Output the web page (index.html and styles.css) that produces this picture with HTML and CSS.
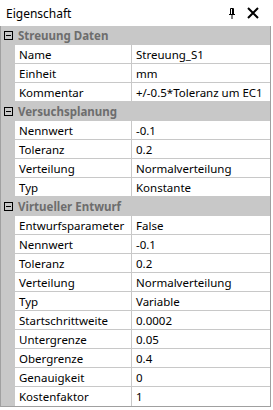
FILE: index.html
```html
<!DOCTYPE html>
<html>
<head>
<meta charset="utf-8">
<link rel="stylesheet" href="styles.css">
</head>
<body>
<div class="window">
  <div class="titlebar">
    <span class="title">Eigenschaft</span>
    <span class="tools">
      <svg class="pin" width="8" height="11" viewBox="0 0 8 11">
        <path d="M2.5 0.5h3v6h-3z M1 6.5h6 M4 7v4" fill="none" stroke="#000" stroke-width="1"/>
        <path d="M4.5 1v5" stroke="#000" stroke-width="1"/>
      </svg>
      <svg class="close" width="12" height="12" viewBox="0 0 12 12">
        <path d="M1 1L11 11M11 1L1 11" stroke="#000" stroke-width="2"/>
      </svg>
    </span>
  </div>
  <div class="grid">
    <div class="cat"><span class="box"></span><span class="cattext">Streuung Daten</span></div>
    <div class="row"><span class="gut"></span><span class="name">Name</span><span class="val">Streuung_S1</span></div>
    <div class="row"><span class="gut"></span><span class="name">Einheit</span><span class="val">mm</span></div>
    <div class="row"><span class="gut"></span><span class="name">Kommentar</span><span class="val">+/-0.5*Toleranz um EC1</span></div>
    <div class="cat"><span class="box"></span><span class="cattext">Versuchsplanung</span></div>
    <div class="row"><span class="gut"></span><span class="name">Nennwert</span><span class="val">-0.1</span></div>
    <div class="row"><span class="gut"></span><span class="name">Toleranz</span><span class="val">0.2</span></div>
    <div class="row"><span class="gut"></span><span class="name">Verteilung</span><span class="val">Normalverteilung</span></div>
    <div class="row"><span class="gut"></span><span class="name">Typ</span><span class="val">Konstante</span></div>
    <div class="cat"><span class="box"></span><span class="cattext">Virtueller Entwurf</span></div>
    <div class="row"><span class="gut"></span><span class="name">Entwurfsparameter</span><span class="val">False</span></div>
    <div class="row"><span class="gut"></span><span class="name">Nennwert</span><span class="val">-0.1</span></div>
    <div class="row"><span class="gut"></span><span class="name">Toleranz</span><span class="val">0.2</span></div>
    <div class="row"><span class="gut"></span><span class="name">Verteilung</span><span class="val">Normalverteilung</span></div>
    <div class="row"><span class="gut"></span><span class="name">Typ</span><span class="val">Variable</span></div>
    <div class="row"><span class="gut"></span><span class="name">Startschrittweite</span><span class="val">0.0002</span></div>
    <div class="row"><span class="gut"></span><span class="name">Untergrenze</span><span class="val">0.05</span></div>
    <div class="row"><span class="gut"></span><span class="name">Obergrenze</span><span class="val">0.4</span></div>
    <div class="row"><span class="gut"></span><span class="name">Genauigkeit</span><span class="val">0</span></div>
    <div class="row"><span class="gut"></span><span class="name">Kostenfaktor</span><span class="val">1</span></div>
  </div>
</div>
</body>
</html>
```
FILE: styles.css
```css
html, body {
  margin: 0;
  padding: 0;
  background: #ffffff;
}
body {
  font-family: "Noto Sans", "Open Sans", sans-serif;
  font-size: 12px;
  color: #000;
  width: 273px;
  height: 410px;
  overflow: hidden;
}
.window {
  display: flex;
  flex-direction: column;
  width: 271px;
}
.titlebar {
  height: 26px;
  display: flex;
  align-items: center;
  justify-content: space-between;
  padding: 0 12px 0 6px;
}
.title {
  font-size: 12px;
}
.tools {
  display: flex;
  align-items: center;
  gap: 11px;
}
.grid {
  border: 1px solid #a0a0a0;
  border-top: none;
  background: #c8c8c8;
  display: flex;
  flex-direction: column;
  font-size: 11.5px;
}
.cat {
  height: 19px;
  display: flex;
  align-items: center;
  background: #c8c8c8;
}
.box {
  width: 7px;
  height: 7px;
  border: 1px solid #000;
  margin: 0 5px 0 3px;
  position: relative;
  flex: none;
}
.box::after {
  content: "";
  position: absolute;
  left: 1px;
  right: 1px;
  top: 3px;
  height: 1px;
  background: #000;
}
.cattext {
  font-weight: bold;
  color: #6d6d6d;
}
.row {
  height: 19px;
  display: grid;
  grid-template-columns: 14px 117px 1fr;
}
.name, .val {
  background: #fff;
  border-bottom: 1px solid #c8c8c8;
  display: flex;
  align-items: center;
  padding-left: 4px;
  white-space: nowrap;
  overflow: hidden;
}
.name {
  border-right: 1px solid #c8c8c8;
}
.row:last-child .name, .row:last-child .val {
  border-bottom: none;
}
```
